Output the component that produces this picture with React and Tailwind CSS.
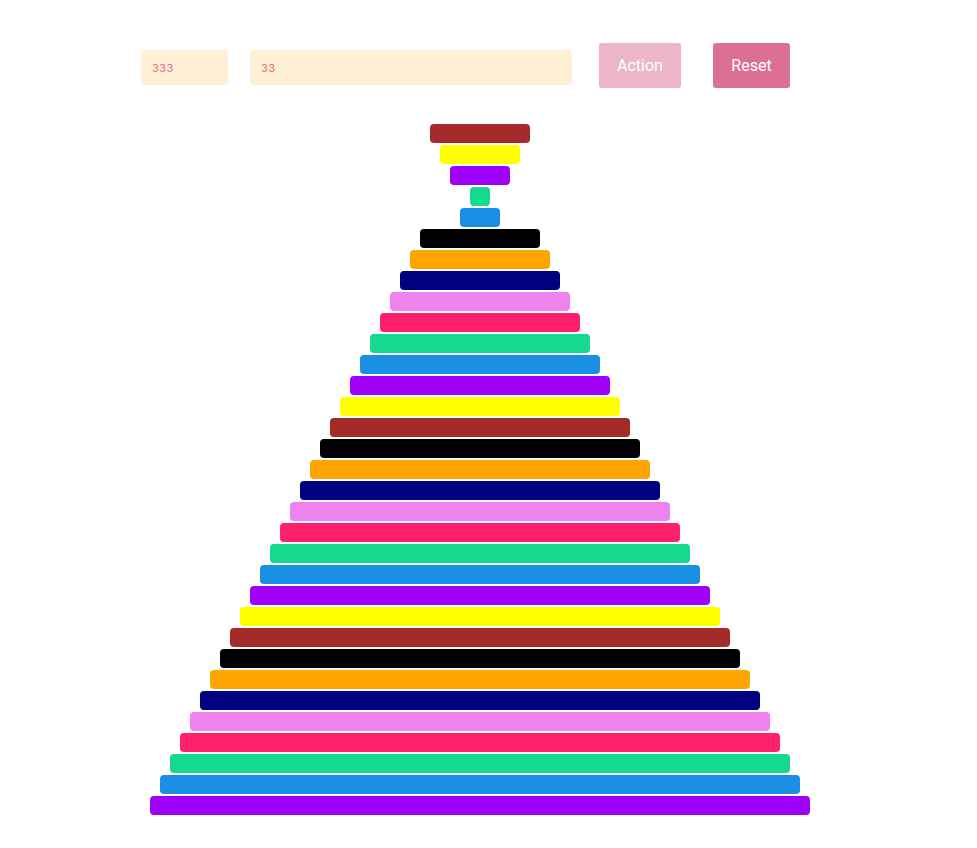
import React from 'react';

// value -> colour, keyed by value % 10
const palette = {
  1: 'bg-[#15d98f]',
  2: 'bg-[#1b8fe4]',
  3: 'bg-[#a000f8]',
  4: 'bg-[#ffff00]',
  5: 'bg-[#a52a2a]',
  6: 'bg-[#000000]',
  7: 'bg-[#ffa500]',
  8: 'bg-[#000080]',
  9: 'bg-[#ee82ee]',
  0: 'bg-[#ff1f6b]',
};

const values = [5, 4, 3, 1, 2];
for (let i = 6; i <= 33; i++) values.push(i);

const App = () => {
  return (
    <div className="min-h-screen bg-white pt-[43px]" style={{ fontFamily: 'Roboto, "Noto Sans", sans-serif' }}>
      {/* Controls */}
      <div className="ml-[141px] flex items-start">
        <input
          defaultValue="333"
          className="mt-[7px] h-[35px] w-[87px] rounded bg-[#ffefd5] px-[11px] font-['Inter'] text-[11px] tracking-[0.5px] text-[#db7093] outline-none"
        />
        <input
          defaultValue="33"
          className="ml-[22px] mt-[7px] h-[35px] w-[322px] rounded bg-[#ffefd5] px-[11px] font-['Inter'] text-[11px] tracking-[0.5px] text-[#db7093] outline-none"
        />
        <button
          type="button"
          disabled
          className="ml-[27px] h-[45px] w-[82px] rounded-[3px] bg-[#db7093] text-[16px] text-white opacity-50"
        >
          Action
        </button>
        <button
          type="button"
          className="ml-[32px] h-[45px] w-[77px] rounded-[3px] bg-[#db7093] text-[16px] text-white"
        >
          Reset
        </button>
      </div>

      {/* Bars */}
      <div className="ml-[150px] mt-[36px] flex w-[660px] flex-col items-center gap-[2px]">
        {values.map((v) => (
          <div
            key={v}
            className={`h-[19px] rounded ${palette[v % 10]}`}
            style={{ width: v * 20 }}
          />
        ))}
      </div>
    </div>
  );
};

export default App;
